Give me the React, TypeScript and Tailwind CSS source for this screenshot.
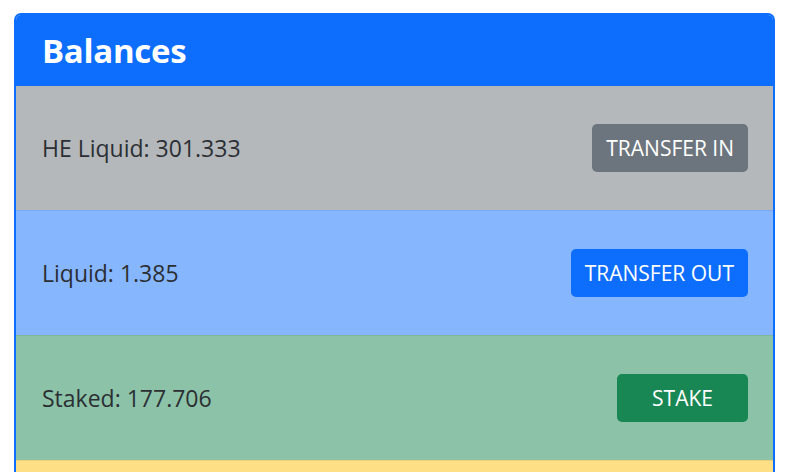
export default function App() {
  const rows = [
    { label: "HE Liquid: 301.333", bg: "bg-[#b5b8bb]", btn: "TRANSFER IN", btnBg: "bg-[#6c757d]", border: "", h: "h-[124px]" },
    { label: "Liquid: 1.385", bg: "bg-[#86b6fe]", btn: "TRANSFER OUT", btnBg: "bg-[#0d6efd]", border: "border-t border-[#76a9f5]", h: "h-[125px]" },
    { label: "Staked: 177.706", bg: "bg-[#8cc3a8]", btn: "STAKE", btnBg: "bg-[#198754]", border: "border-t border-[#7fb69b]", h: "h-[125px]" },
    { label: "", bg: "bg-[#fedf85]", btn: "", btnBg: "", border: "border-t border-[#eccf76]", h: "h-[125px]" },
  ];
  return (
    <div className="w-[792px] h-[472px] overflow-hidden bg-white" style={{ fontFamily: '"Open Sans", "Noto Sans", sans-serif' }}>
      <div className="ml-[14px] mt-[13px] w-[761px] rounded-t-[7px] border-2 border-b-0 border-[#0d6efd] overflow-hidden">
        <div className="h-[71px] bg-[#0d6efd] flex items-center pl-[26px]">
          <h3 className="text-white text-[33px] font-bold leading-none tracking-[-0.3px]">Balances</h3>
        </div>
        {rows.map((r, i) => (
          <div key={i} className={`${r.h} ${r.bg} ${r.border} flex items-center justify-between pl-[26px] pr-[25px]`}>
            <span className="text-[23px] text-[#2b2f33]">{r.label}</span>
            {r.btn && (
              <button className={`${r.btnBg} text-white text-[21px] h-[48px] min-w-[131px] px-[14px] rounded-[5px] leading-none`}>{r.btn}</button>
            )}
          </div>
        ))}
      </div>
    </div>
  );
}
